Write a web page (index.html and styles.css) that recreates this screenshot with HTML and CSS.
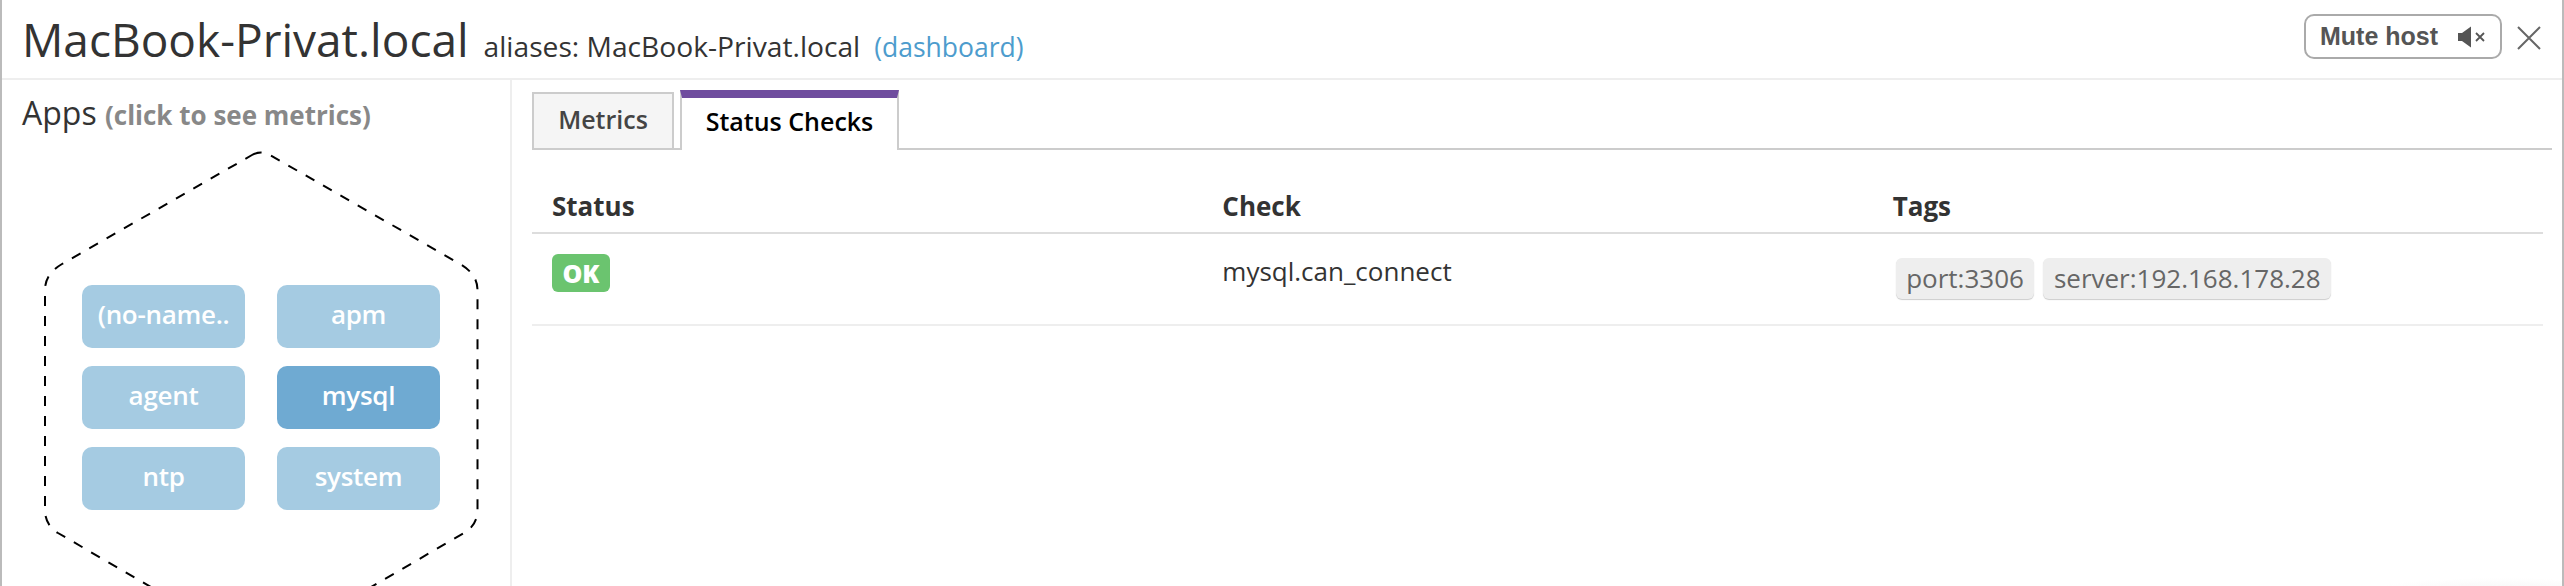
FILE: index.html
```html
<!DOCTYPE html>
<html lang="en">
<head>
    <meta charset="UTF-8">
    <title>MacBook-Privat.local</title>
    <link rel="stylesheet" href="styles.css">
</head>
<body>
    <div class="panel">
        <header class="top">
            <div class="host">
                <h1>MacBook-Privat.local</h1>
                <span class="aliases">aliases: MacBook-Privat.local</span>
                <a class="dash" href="#">(dashboard)</a>
            </div>
            <div class="actions">
                <button class="mute">
                    <span>Mute host</span>
                    <svg width="30" height="22" viewBox="0 0 30 22">
                        <path d="M0 7h4l9-6.500v21l-9-6.500h-4z" fill="#555"/>
                        <path d="M18 7l8 8M26 7l-8 8" stroke="#555" stroke-width="1.800" fill="none"/>
                    </svg>
                </button>
                <svg class="close" width="24" height="24" viewBox="0 0 24 24">
                    <path d="M1 1l22 22M23 1l-22 22" stroke="#666" stroke-width="2" fill="none"/>
                </svg>
            </div>
        </header>
        <div class="main">
            <aside class="apps">
                <h2>Apps <small>(click to see metrics)</small></h2>
                <svg class="hex" width="510" height="506" viewBox="0 0 510 506">
                    <path d="M252 75Q261 70 270 75L460 184Q477.500 194 477.500 210V430Q477.500 445 464 453L261 571L58 453Q45 445 45 430V210Q45 194 62 184Z" fill="none" stroke="#000" stroke-width="2" stroke-dasharray="10 10"/>
                </svg>
                <div class="tiles">
                    <div class="tile">(no-name..</div>
                    <div class="tile">apm</div>
                    <div class="tile">agent</div>
                    <div class="tile active">mysql</div>
                    <div class="tile">ntp</div>
                    <div class="tile">system</div>
                </div>
            </aside>
            <section class="content">
                <div class="tabs">
                    <div class="tab">Metrics</div>
                    <div class="tab current">Status Checks</div>
                </div>
                <table>
                    <tr>
                        <th>Status</th>
                        <th>Check</th>
                        <th>Tags</th>
                    </tr>
                    <tr>
                        <td><span class="ok">OK</span></td>
                        <td class="check">mysql.can_connect</td>
                        <td>
                            <div class="tags">
                                <span class="tag">port:3306</span>
                                <span class="tag">server:192.168.178.28</span>
                            </div>
                        </td>
                    </tr>
                </table>
            </section>
        </div>
    </div>
</body>
</html>
```

FILE: styles.css
```css
html, body {
    margin: 0;
    height: 586px;
    overflow: hidden;
    background: #fff;
}

body {
    font-family: "Open Sans", sans-serif;
    color: #333;
}

.panel {
    height: 586px;
    box-sizing: border-box;
    border-left: 2px solid #bbb;
    border-right: 2px solid #bbb;
    background: radial-gradient(ellipse 130px 12px at 2500px 590px, #f6f6f6, #fff);
}

.top {
    height: 80px;
    box-sizing: border-box;
    border-bottom: 2px solid #eee;
    display: flex;
    justify-content: space-between;
    padding: 14px 21px 0 20px;
}

.host {
    display: flex;
    align-items: baseline;
    height: 50px;
}

h1 {
    margin: 0 15px 0 0;
    font-size: 46px;
    font-weight: 400;
    line-height: 50px;
}

.aliases {
    font-size: 28.200px;
}

.dash {
    margin-left: 14px;
    font-size: 26.500px;
    color: #4d9ccd;
    text-decoration: none;
}

.actions {
    display: flex;
    align-items: flex-start;
    gap: 15px;
}

.mute {
    width: 198px;
    height: 45px;
    box-sizing: border-box;
    display: flex;
    align-items: center;
    justify-content: space-between;
    padding: 0 12px 0 14px;
    background: #fff;
    border: 2px solid #aaa;
    border-radius: 10px;
    font-family: "Liberation Sans", sans-serif;
    font-size: 25px;
    font-weight: 700;
    color: #555;
}

.close {
    margin-top: 12px;
}

.main {
    display: flex;
    height: 506px;
}

.apps {
    position: relative;
    width: 510px;
    height: 506px;
    flex: none;
    box-sizing: border-box;
    border-right: 2px solid #eee;
    overflow: hidden;
    padding: 14px 0 0 20px;
}

h2 {
    margin: 0;
    font-size: 32px;
    font-weight: 400;
    line-height: 38px;
}

h2 small {
    font-size: 26px;
    font-weight: 700;
    color: #888;
}

.hex {
    position: absolute;
    left: -2px;
    top: 0;
}

.tiles {
    position: relative;
    display: grid;
    grid-template-columns: 163px 163px;
    grid-auto-rows: 63px;
    column-gap: 32px;
    row-gap: 18px;
    margin: 151px 0 0 60px;
}

.tile {
    background: #a5cbe2;
    border-radius: 10px;
    color: #fff;
    font-size: 26px;
    font-weight: 600;
    letter-spacing: -0.300px;
    line-height: 59px;
    text-align: center;
}

.tile.active {
    background: #6faad2;
}

.content {
    flex: 1;
    padding: 10px 10px 0 20px;
}

.tabs {
    display: flex;
    align-items: flex-end;
    height: 60px;
    box-sizing: border-box;
    border-bottom: 2px solid #ccc;
}

.tab {
    width: 142px;
    height: 56px;
    box-sizing: border-box;
    background: #f5f5f5;
    border: 2px solid #ccc;
    border-bottom: none;
    font-size: 25px;
    font-weight: 600;
    line-height: 50px;
    text-align: center;
    color: #444;
}

.tab.current {
    width: 219px;
    height: 60px;
    margin: 0 0 -2px 6px;
    background: #fff;
    border-top: 8px solid #6f4d9e;
    border-left: 2px solid #ccc;
    color: #000;
    line-height: 46px;
}

table {
    width: 2011px;
    margin-top: 22px;
    border-collapse: separate;
    border-spacing: 0;
    table-layout: fixed;
}

th {
    height: 52px;
    padding: 8px 20px 0;
    text-align: left;
    font-size: 26px;
    font-weight: 700;
    border-bottom: 2px solid #ddd;
}

td {
    height: 92px;
    box-sizing: border-box;
    padding: 0 20px;
    font-size: 26px;
    vertical-align: top;
    border-bottom: 2px solid #eee;
}

.ok {
    display: block;
    margin-top: 20px;
    width: 58px;
    height: 38px;
    background: #6bc46f;
    border-radius: 6px;
    color: #fff;
    font-size: 25px;
    font-weight: 800;
    line-height: 38px;
    text-align: center;
}

td.check {
    padding-top: 19px;
}

.tags {
    display: flex;
    gap: 9px;
    padding: 24px 0 0 3px;
}

.tag {
    height: 41px;
    padding: 0 10.500px;
    background: #eee;
    border-radius: 6px;
    box-shadow: 0 1px 1px #ccc;
    font-size: 26px;
    line-height: 40px;
    color: #666;
}
```
